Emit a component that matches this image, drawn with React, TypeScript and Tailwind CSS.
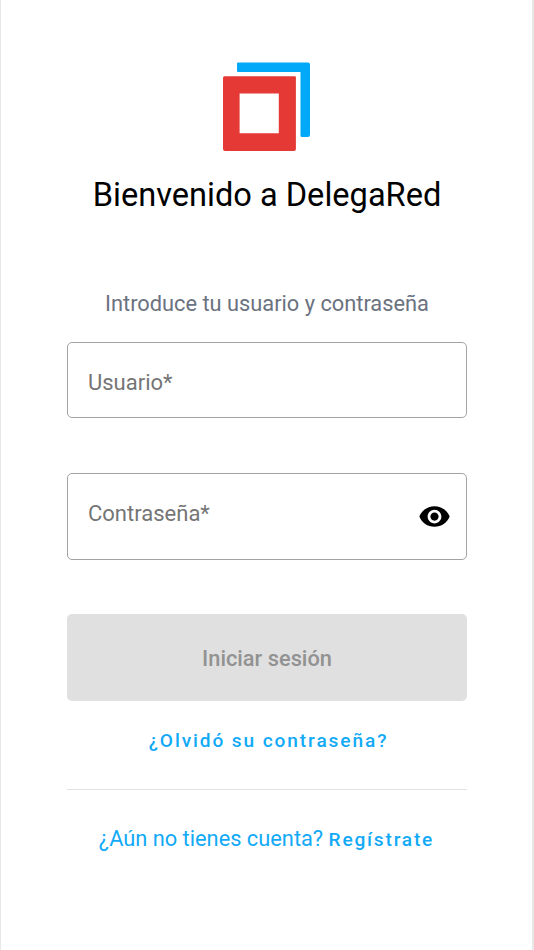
import { useState } from 'react';

function Logo() {
  return (
    <svg width="88" height="90" viewBox="0 0 88 90" aria-label="DelegaRed">
      <path
        d="M15 0.5H85a2 2 0 0 1 2 2V73a2 2 0 0 1-2 2H79a1.5 1.5 0 0 1-1.5-1.5V10H15a1 1 0 0 1-1-1V1.5a1 1 0 0 1 1-1Z"
        fill="#03a9f9"
      />
      <path
        fillRule="evenodd"
        d="M1.5 14.2H71.9a1 1 0 0 1 1 1V87a2 2 0 0 1-2 2H2a2 2 0 0 1-2-2V15.7a1.5 1.5 0 0 1 1.5-1.5ZM16.6 31.5V71.3H55.8V31.5Z"
        fill="#e53935"
      />
    </svg>
  );
}

function EyeIcon() {
  return (
    <svg width="33" height="33" viewBox="0 0 24 24" fill="currentColor">
      <path d="M12 4.5C7 4.5 2.73 7.61 1 12c1.73 4.39 6 7.5 11 7.5s9.27-3.11 11-7.5c-1.73-4.39-6-7.5-11-7.5zM12 17c-2.76 0-5-2.24-5-5s2.24-5 5-5 5 2.24 5 5-2.24 5-5 5zm0-8c-1.66 0-3 1.34-3 3s1.34 3 3 3 3-1.34 3-3-1.34-3-3-3z" />
    </svg>
  );
}

const inputClass =
  'block w-full min-w-0 bg-transparent text-[22px] leading-8 text-black outline-none placeholder:text-[#757575] placeholder:opacity-100';

export default function App() {
  const [user, setUser] = useState('');
  const [password, setPassword] = useState('');
  const [visible, setVisible] = useState(false);

  return (
    <main className="h-[950px] w-[534px] border-l border-r-2 border-[#e8e8e8] bg-white px-[66px] pt-[62px] font-[Roboto,sans-serif]">
      <form className="flex w-[400px] flex-col items-center" onSubmit={(e) => e.preventDefault()}>
        <Logo />
        <h1 className="mt-[23px] text-[32.6px] leading-10 whitespace-nowrap text-black">Bienvenido a DelegaRed</h1>
        <p className="mt-[73px] text-[21.8px] leading-8 whitespace-nowrap text-[#6b7280]">
          Introduce tu usuario y contraseña
        </p>

        <label className="mt-[22px] flex h-[76px] w-full items-center rounded-[5px] border border-[#a3a3a3] px-5 pt-[5px]">
          <input
            className={inputClass}
            placeholder="Usuario*"
            value={user}
            onChange={(e) => setUser(e.target.value)}
          />
        </label>

        <div className="mt-[55px] flex h-[87px] w-full items-center rounded-[5px] border border-[#a3a3a3] pr-[15px] pl-5">
          <label className="flex-1 pb-[5px]">
            <input
              className={inputClass}
              type={visible ? 'text' : 'password'}
              placeholder="Contraseña*"
              value={password}
              onChange={(e) => setPassword(e.target.value)}
            />
          </label>
          <button type="button" className="text-black" onClick={() => setVisible(!visible)}>
            <EyeIcon />
          </button>
        </div>

        <button
          type="submit"
          disabled
          className="mt-[54.4px] h-[87px] w-full rounded-[5px] bg-[#e0e0e0] pt-[2px] text-[21.8px] font-medium text-[#929292]"
        >
          Iniciar sesión
        </button>

        <a
          href="#"
          className="mt-[23.6px] pl-[3px] text-[19.1px] leading-8 font-medium tracking-[1.9px] whitespace-nowrap text-[#12aaf7]"
        >
          ¿Olvidó su contraseña?
        </a>

        <hr className="mt-8 w-full border-[#e2e2e2]" />

        <p className="mt-[33px] -ml-px text-[21.8px] leading-8 whitespace-nowrap text-[#12aaf7]">
          ¿Aún no tienes cuenta?{' '}
          <a href="#" className="text-[19.1px] font-medium tracking-[1.8px]">
            Regístrate
          </a>
        </p>
      </form>
    </main>
  );
}
